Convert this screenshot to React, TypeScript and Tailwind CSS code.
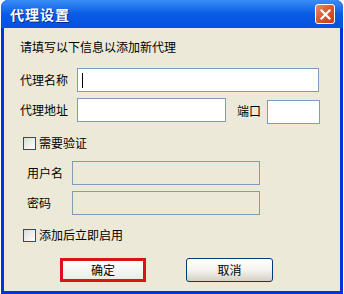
import React from 'react'

const font = { fontFamily: '"Noto Sans CJK SC", "Liberation Sans", sans-serif' }

function Checkbox({ label }: { label: string }) {
  return (
    <div className="flex items-center h-[16px]">
      <span className="w-[13px] h-[13px] border border-[#1C5180] bg-gradient-to-br from-[#DCDCD7] to-white" />
      <span className="ml-[3px] text-[12px] leading-none text-black">{label}</span>
    </div>
  )
}

export default function ProxyDialog() {
  return (
    <div className="w-[344px] h-[294px] bg-white overflow-hidden relative" style={font}>
      <div className="ml-[1px] w-[342px] h-[294px] bg-[#0831D9] rounded-t-[7px] flex flex-col">
        {/* title bar */}
        <div className="h-[28px] shrink-0 rounded-t-[7px] bg-gradient-to-b from-[#3A8CF5] via-[#0A5BE6] to-[#0550E0] flex items-center justify-between pl-[9px] pr-[8px]">
          <span className="text-white font-bold text-[14px] leading-none tracking-[1px] [text-shadow:1px_1px_0_#0A2A8A]">代理设置</span>
          <button className="w-[20px] h-[20px] rounded-[3px] border border-white bg-gradient-to-br from-[#E88A6C] via-[#D9562E] to-[#C43F17] flex items-center justify-center">
            <svg width="11" height="11" viewBox="0 0 11 11">
              <path d="M1.5 1.5 L9.5 9.5 M9.5 1.5 L1.5 9.5" stroke="white" strokeWidth="2.2" strokeLinecap="square" />
            </svg>
          </button>
        </div>
        {/* body */}
        <div className="mx-[3px] mb-[3px] flex-1 bg-[#ECE9D8] pl-[16px] text-[12px] text-black">
          <div className="mt-[10px] h-[18px] flex items-center">请填写以下信息以添加新代理</div>

          <div className="mt-[12px] flex items-center h-[24px]">
            <span className="w-[57px]">代理名称</span>
            <div className="w-[242px] h-[24px] border border-[#7F9DB9] bg-white flex items-center pl-[4px]">
              <span className="w-[1px] h-[15px] bg-black" />
            </div>
          </div>

          <div className="mt-[6px] flex items-start h-[26px]">
            <span className="w-[57px] h-[24px] flex items-center">代理地址</span>
            <div className="w-[149px] h-[24px] border border-[#7F9DB9] bg-white" />
            <span className="ml-[11px] w-[30px] h-[26px] flex items-center">端口</span>
            <div className="mt-[2px] w-[53px] h-[24px] border border-[#7F9DB9] bg-white" />
          </div>

          <div className="mt-[11px] pl-[3px]">
            <Checkbox label="需要验证" />
          </div>

          <div className="mt-[10px] flex items-center h-[24px] pl-[7px]">
            <span className="w-[45px]">用户名</span>
            <div className="w-[188px] h-[24px] border border-[#7F9DB9] bg-[#ECE9D8]" />
          </div>
          <div className="mt-[6px] flex items-center h-[24px] pl-[7px]">
            <span className="w-[45px]">密码</span>
            <div className="w-[188px] h-[24px] border border-[#7F9DB9] bg-[#ECE9D8]" />
          </div>

          <div className="mt-[12px] pl-[3px]">
            <Checkbox label="添加后立即启用" />
          </div>

          <div className="mt-[15px] flex items-start">
            <button className="ml-[40px] w-[86px] h-[24px] border-[3px] border-[#E0101A] bg-gradient-to-b from-white to-[#ECEBE6] flex items-center justify-center text-[12px] leading-none">
              确定
            </button>
            <button className="ml-[40px] w-[87px] h-[24px] rounded-[3px] border border-[#003C74] bg-gradient-to-b from-white via-[#F4F3EE] to-[#D6D0C5] flex items-center justify-center text-[12px] leading-none">
              取消
            </button>
          </div>
        </div>
      </div>
    </div>
  )
}
